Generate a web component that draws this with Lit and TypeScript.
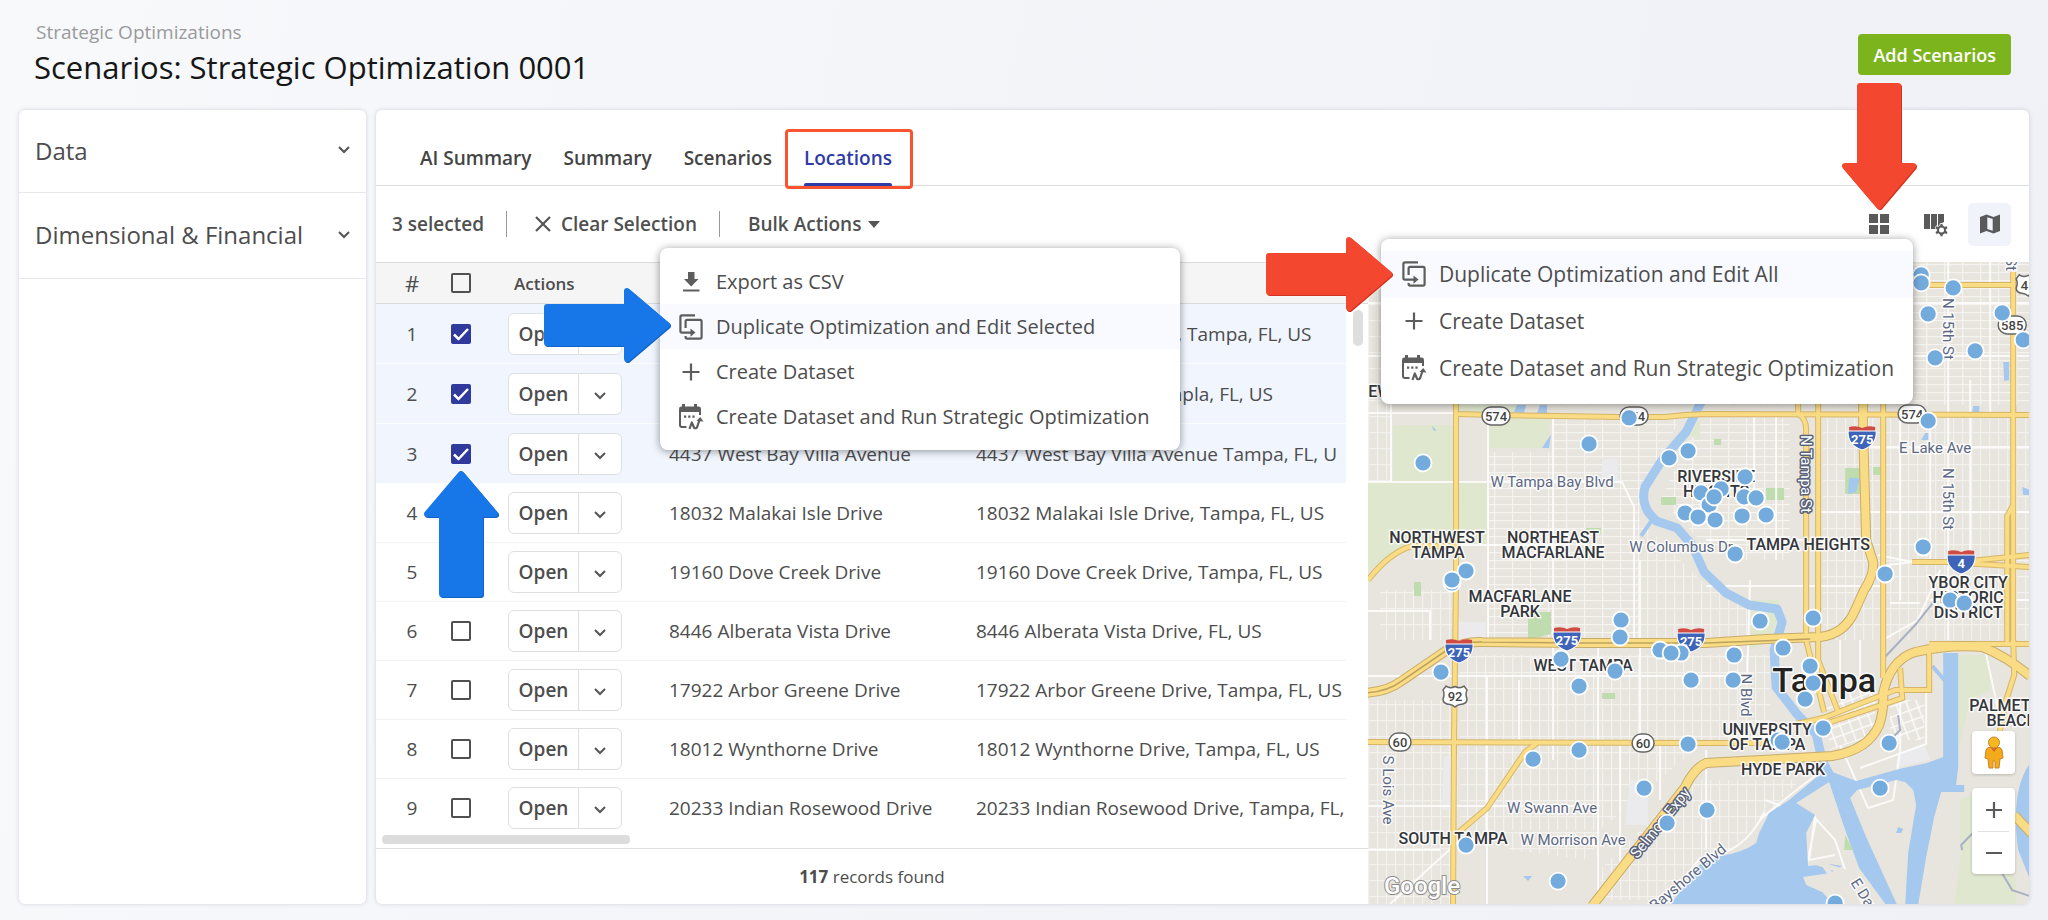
import { LitElement, html, svg, css } from "lit";
import { customElement, property } from "lit/decorators.js";

interface Location {
  name: string;
  address: string;
  selected: boolean;
}

const LOCATIONS: Location[] = [
  { name: "18119 Sandy Pointe Drive", address: "18119 Sandy Pointe Dr, Tampa, FL, US", selected: true },
  { name: "8710 Key Biscayne Drive", address: "8710 Key Biscayne Tampla, FL, US", selected: true },
  { name: "4437 West Bay Villa Avenue", address: "4437 West Bay Villa Avenue Tampa, FL, U", selected: true },
  { name: "18032 Malakai Isle Drive", address: "18032 Malakai Isle Drive, Tampa, FL, US", selected: false },
  { name: "19160 Dove Creek Drive", address: "19160 Dove Creek Drive, Tampa, FL, US", selected: false },
  { name: "8446 Alberata Vista Drive", address: "8446 Alberata Vista Drive, FL, US", selected: false },
  { name: "17922 Arbor Greene Drive", address: "17922 Arbor Greene Drive, Tampa, FL, US", selected: false },
  { name: "18012 Wynthorne Drive", address: "18012 Wynthorne Drive, Tampa, FL, US", selected: false },
  { name: "20233 Indian Rosewood Drive", address: "20233 Indian Rosewood Drive, Tampa, FL,", selected: false },
];

const chevron = html`<svg class="chevron" width="14" height="10" viewBox="0 0 14 10" aria-hidden="true">
  <path d="M2 2l5 5 5-5" fill="none" stroke="#555" stroke-width="2" />
</svg>`;

const iconDownload = html`<svg width="24" height="24" viewBox="0 0 24 24" aria-hidden="true">
  <path d="M9 2h6.500v7h4L12.200 16.500L5 9h4z" fill="#5d5d5d" /><path d="M4 19.500h16.500v2H4z" fill="#5d5d5d" />
</svg>`;

const iconDuplicate = html`<svg width="26" height="28" viewBox="0 0 26 28" aria-hidden="true">
  <g fill="none" stroke="#5d5d5d" stroke-width="2.200">
    <path d="M17 2.400H4Q2.400 2.400 2.400 4V18Q2.400 19.600 4 19.600H14" />
    <path d="M7.600 15V8.400Q7.600 6.800 9.200 6.800H22Q23.600 6.800 23.600 8.400V24Q23.600 25.600 22 25.600H9.200Q7.600 25.600 7.600 24V23" />
  </g>
  <path d="M12.500 15.500l5 4.100-5 4.100z" fill="#5d5d5d" />
</svg>`;

const iconPlus = html`<svg width="20" height="20" viewBox="0 0 20 20" aria-hidden="true">
  <path d="M10 1.500v17M1.500 10h17" stroke="#5d5d5d" stroke-width="2.200" />
</svg>`;

const iconCalendar = html`<svg width="28" height="28" viewBox="0 0 28 28" aria-hidden="true">
  <path d="M2 6Q2 3.600 4.400 3.600H5V1H8V3.600H17V1H20V3.600H21.500Q24 3.600 24 6V9H2Z" fill="#5d5d5d" />
  <path d="M3 9V22Q3 24 5 24H9.500M23 9V12" fill="none" stroke="#5d5d5d" stroke-width="2" />
  <path d="M7 12.500h2.200v2.200H7zM11.200 12.500h2.200v2.200h-2.200zM15.400 12.500h2.200v2.200h-2.200z" fill="#5d5d5d" />
  <path d="M12.500 26L14.800 19.500L17.200 25Q19.800 26 20.500 23L22.500 17" fill="none" stroke="#5d5d5d" stroke-width="2.200" stroke-linejoin="round" />
  <path d="M19.500 18L23.200 14L26.500 18.500z" fill="#5d5d5d" />
</svg>`;

const ICONS = { download: iconDownload, duplicate: iconDuplicate, plus: iconPlus, calendar: iconCalendar };

interface MenuEntry {
  icon: keyof typeof ICONS;
  label: string;
  active?: boolean;
}

@customElement("callout-arrow")
export class CalloutArrow extends LitElement {
  @property() color = "blue";
  @property() direction = "right";
  @property({ type: Number }) shaft = 80;

  static styles = css`
    :host {
      display: block;
      pointer-events: none;
    }
    svg {
      display: block;
      overflow: visible;
      filter: drop-shadow(0 0 1px rgba(255, 255, 255, 0.9));
    }
    .edge {
      stroke-width: 6;
      stroke-linejoin: round;
    }
    .blue {
      fill: #1877e8;
      stroke: #1877e8;
    }
    .blue-edge {
      fill: #1462c4;
      stroke: #1462c4;
    }
    .red {
      fill: #f4472f;
      stroke: #f4472f;
    }
    .red-edge {
      fill: #cf3320;
      stroke: #cf3320;
    }
  `;

  render() {
    const s = this.shaft;
    const len = s + 46;
    const pointing = this.direction === "right";
    const d = pointing
      ? `M3 19H${s + 3}V3L${len - 3} 37L${s + 3} 71V55H3Z`
      : this.direction === "up"
        ? `M37 3L71 43H56V${len - 3}H18V43H3Z`
        : `M18 3H56V${s + 3}H71L37 ${len - 3}L3 ${s + 3}H18Z`;
    const w = pointing ? len : 74;
    const h = pointing ? 74 : len;
    return html`<svg width=${w} height=${h} viewBox="0 0 ${w} ${h}" aria-hidden="true">
      <path class="edge ${this.color}-edge" d=${d} transform="translate(1 1)" />
      <path class="edge ${this.color}" d=${d} />
    </svg>`;
  }
}

@customElement("action-menu")
export class ActionMenu extends LitElement {
  @property({ attribute: false }) items: MenuEntry[] = [];
  @property() size = "regular";

  static styles = css`
    :host {
      display: block;
      background: #fff;
      border-radius: 8px;
      box-shadow: 0 1px 8px rgba(0, 0, 0, 0.42);
    }
    .menu {
      display: flex;
      flex-direction: column;
      padding: 11px 0;
    }
    .menu.large {
      padding: 12px 0;
    }
    .item {
      display: grid;
      grid-template-columns: 30px 1fr;
      align-items: center;
      column-gap: 10px;
      height: 45px;
      padding: 0 16px;
      border: 0;
      background: none;
      color: #4d4d4d;
      font: 400 20px/28px "Open Sans", sans-serif;
      text-align: left;
      white-space: nowrap;
    }
    .large .item {
      height: 47px;
      padding: 0 18px;
      font-size: 21px;
    }
    .item.active {
      background: #f8faff;
    }
    .icon {
      display: grid;
      place-items: center;
    }
  `;

  render() {
    return html`<div class="menu ${this.size}" role="menu">
      ${this.items.map(
        (i) => html`<button class="item ${i.active ? "active" : ""}" role="menuitem">
          <span class="icon">${ICONS[i.icon]}</span><span>${i.label}</span>
        </button>`
      )}
    </div>`;
  }
}

const PINS: [number, number][] = [
  [1921, 275], [1921, 283], [1953, 288], [1928, 314], [2002, 313], [2023, 340], [1975, 351], [1935, 358],
  [1928, 421], [1745, 477], [1423, 463], [1589, 444], [1629, 418], [1669, 458], [1688, 451], [1701, 493],
  [1709, 505], [1685, 513], [1698, 517], [1721, 489], [1714, 497], [1744, 497], [1756, 498], [1715, 520],
  [1742, 516], [1766, 515], [1735, 554], [1923, 547], [1885, 574], [1466, 571], [1452, 583], [1452, 580],
  [1621, 620], [1620, 637], [1561, 659], [1441, 672], [1579, 686], [1615, 671], [1660, 650], [1681, 653],
  [1671, 653], [1691, 680], [1688, 744], [1579, 750], [1533, 759], [1644, 788], [1667, 823], [1466, 845],
  [1558, 881], [1760, 621], [1813, 618], [1783, 648], [1734, 655], [1733, 680], [1810, 666], [1813, 683],
  [1805, 699], [1823, 728], [1778, 740], [1782, 742], [1889, 743], [1880, 788], [1707, 810], [1835, 903],
  [1950, 600], [1964, 603],
];

const ROADS: string[] = [
  "M1456 262V580L1454 740L1453 906",
  "M1456 414L1495 415L1620 417H1665L1685 415L1706 414L2030 415",
  "M1914 285H2014",
  "M2013 272V505L2007 516V645M2013 505V645",
  "M1798 400V414Q1806 418 1806 430V640L1824 712",
  "M1818 400V660L1838 712",
  "M1883 400V678",
  "M1912 562H1960L2030 555M1960 563L2030 567",
  "M1368 742L1706 743H1766",
  "M1796 724L1823 718L1895 690H1929V650M1900 668L1902 698L1830 722",
  "M1537 743L1525 752L1487 808L1459 832",
  "M1368 580Q1390 552 1412 546H1456",
  "M2013 640L2014 675L2006 700L1998 740",
  "M1929 644H2030",
];

const HIGHWAYS: string[] = [
  "M1863 400V430L1866 540L1873 562Q1874 575 1864 590L1855 610Q1845 634 1820 637L1766 639L1706 643H1584L1482 642Q1465 641 1447 650L1400 682Q1388 691 1366 693",
  "M1592 906L1685 787Q1694 768 1706 763L1832 756Q1868 750 1879 725Q1884 710 1883 693Q1890 660 1915 652Q1950 644 1982 647Q2004 655 2030 676",
  "M2014 815L2032 834",
];

const STREETS: string[] = [
  "M1368 303H2030M1391 262V482M1368 482H1622L1634 507V640M1488 415V640M1553 415V760M1456 545H1560M1368 413H1456",
  "M1368 356H2030M1948 262V640M1868 447H2030M1820 512H2030M1754 415V500M1776 415V560M1706 540H1860",
  "M1368 611H1430V640M1368 676H1740M1487 676V904M1519 680V742M1598 640V904M1640 560V742M1368 806H1600M1460 840L1390 904",
  "M1368 850H1440M1620 745V870M1660 742V800M1706 750V850M1750 580L1747 680M1706 586H1880M1840 640V690M1860 640V685",
  "M1900 690V750L1893 800L1868 808L1840 745M1926 692V744L1860 768M1765 800L1815 818L1835 840L1845 870L1862 904",
  "M1764 812Q1744 855 1700 858L1665 904M1816 775Q1770 810 1760 820M1815 815L1809 860L1835 855M1816 820L1806 867",
  "M1882 640L1918 620L1940 570M1929 600H2030M1890 603H1920M1985 650L2000 720L2010 760",
  "M1868 415V560M1900 415V600M1930 415V560M1970 380V560M1990 262V415",
  "M1870 565L1860 600M1878 555L1912 562L1880 566",
];

type Label = [string, number, number];
const AREAS: Label[] = [
  ["NORTHWEST", 1437, 543], ["TAMPA", 1438, 558],
  ["NORTHEAST", 1553, 543], ["MACFARLANE", 1553, 558],
  ["MACFARLANE", 1520, 602], ["PARK", 1520, 617],
  ["WEST TAMPA", 1583, 671], ["SOUTH TAMPA", 1453, 844],
  ["RIVERSIDE", 1716, 482], ["HEIGHTS", 1716, 497],
  ["TAMPA HEIGHTS", 1808, 550],
  ["YBOR CITY", 1968, 588], ["HISTORIC", 1968, 603], ["DISTRICT", 1968, 618],
  ["UNIVERSITY", 1767, 735], ["OF TAMPA", 1767, 750],
  ["HYDE PARK", 1783, 775],
];

const interstate = (x: number, y: number, n: string) => svg`
  <g transform="translate(${x} ${y})">
    <path d="M-13 -11Q-6 -13 0 -10Q6 -13 13 -11V-6H-13Z" fill="#cf4b43" />
    <path d="M-14 -7H14Q15 7 0 12Q-15 7 -14 -7Z" fill="#3d64b8" stroke="#fff" stroke-width="1" />
    <text class="shield-white" y="6">${n}</text>
  </g>`;

const oval = (x: number, y: number, n: string) => svg`
  <g transform="translate(${x} ${y})">
    <rect x=${n.length > 2 ? -14 : -11} y="-9" width=${n.length > 2 ? 28 : 22} height="18" rx="9" fill="#fff" stroke="#666" stroke-width="1.500" />
    <text class="shield-dark" y="5">${n}</text>
  </g>`;

const usRoute = (x: number, y: number, n: string) => svg`
  <g transform="translate(${x} ${y})">
    <path d="M-9 -10Q-5 -7 0 -9.500Q5 -7 9 -10L12 -6Q10 -2 12 3Q12 8 5 8.500Q2 9 0 11Q-2 9 -5 8.500Q-12 8 -12 3Q-10 -2 -12 -6Z" fill="#fff" stroke="#666" stroke-width="1.500" />
    <text class="shield-dark" y="5">${n}</text>
  </g>`;

@customElement("location-map")
export class LocationMap extends LitElement {
  static styles = css`
    :host {
      display: block;
      position: relative;
      overflow: hidden;
      border-radius: 0 0 6px 0;
      background: #e8e5de;
    }
    .canvas {
      display: block;
      position: absolute;
      inset: 0;
      width: 100%;
      height: 100%;
    }
    text {
      font-family: Roboto, sans-serif;
      text-anchor: middle;
      paint-order: stroke;
      stroke: rgba(255, 255, 255, 0.85);
      stroke-width: 3px;
      stroke-linejoin: round;
    }
    .area {
      font-size: 16px;
      font-weight: 500;
      fill: #33363b;
    }
    .street {
      font-size: 15px;
      fill: #5b6884;
    }
    .major {
      font-size: 15px;
      fill: #fff;
      stroke: #56617a;
    }
    .city {
      font-size: 34px;
      font-weight: 500;
      fill: #222;
    }
    .shield-white {
      font-size: 13px;
      font-weight: 700;
      fill: #fff;
      stroke: none;
    }
    .shield-dark {
      font-size: 13px;
      font-weight: 500;
      fill: #444;
      stroke: none;
    }
    .brand {
      font: 500 24px Roboto, sans-serif;
      fill: #fff;
      stroke: #8c8c8c;
      stroke-width: 2px;
    }
    .casing {
      fill: none;
      stroke: #d8b668;
      stroke-width: 6px;
    }
    .road {
      fill: none;
      stroke: #f9dc84;
      stroke-width: 4px;
    }
    .casing.wide {
      stroke: #c9ac6a;
      stroke-width: 10px;
    }
    .road.wide {
      stroke-width: 8px;
    }
    .street-line {
      fill: none;
      stroke: #fff;
      stroke-width: 2px;
      opacity: 0.8;
    }
    .controls {
      position: absolute;
      right: 14px;
      bottom: 30px;
      display: flex;
      flex-direction: column;
      gap: 14px;
    }
    .person,
    .zoom {
      width: 43px;
      border-radius: 4px;
      background: #fff;
      box-shadow: 0 1px 3px rgba(0, 0, 0, 0.2);
    }
    .person {
      height: 43px;
      padding: 0;
      border: 0;
      display: grid;
      place-items: center;
    }
    .zoom {
      display: flex;
      flex-direction: column;
    }
    .zoom button {
      height: 43px;
      margin: 0 6px;
      padding: 0;
      border: 0;
      background: none;
      display: grid;
      place-items: center;
    }
    .zoom button + button {
      border-top: 1px solid #e2e2e2;
    }
  `;

  render() {
    return html`
      <svg class="canvas" viewBox="1368 262 661 642" preserveAspectRatio="xMidYMid slice" role="img" aria-label="Tampa">
        <defs>
          <pattern id="blocks" width="18" height="8" patternUnits="userSpaceOnUse">
            <path d="M0 .5H18M.5 0V8" stroke="#fff" stroke-width="1.200" opacity=".6" />
          </pattern>
          <pattern id="columns" width="9" height="16" patternUnits="userSpaceOnUse">
            <path d="M0 .5H9M.5 0V16" stroke="#fff" stroke-width="1.200" opacity=".5" />
          </pattern>
          <pattern id="downtown" width="10" height="10" patternUnits="userSpaceOnUse" patternTransform="rotate(-20)">
            <path d="M0 .5H10M.5 0V10" stroke="#fff" stroke-width="1.800" opacity=".85" />
          </pattern>
        </defs>
        <rect x="1368" y="262" width="661" height="642" fill="#e8e5de" />
        <path d="M1459 262H2029V405H1459ZM1488 452H1640V640H1488ZM1552 418H1680L1640 500H1552ZM1700 418H1790V560H1720L1660 500Z" fill="url(#blocks)" />
        <path d="M1368 262H1392V482H1368ZM1823 418H2029V640H1823ZM1460 655H1770V740H1460ZM1368 700H1452V904H1368ZM1460 745H1700L1600 830H1460ZM1500 832H1600L1590 860L1510 850ZM1600 870L1690 780H1800L1730 850L1660 900H1600ZM1380 590H1452V640H1380ZM1640 520L1700 580L1760 610V640H1640Z" fill="url(#columns)" />
        <path d="M1824 700L1876 680L1874 735L1830 750ZM1890 700H1924V740H1890Z" fill="url(#downtown)" />
        <g fill="#dfe7cf">
          <path d="M1393 425H1453V482H1393ZM1368 482H1487V545H1410L1385 562L1368 570ZM1488 418H1552L1546 448H1488ZM1459 405H1518V413H1459Z" />
          <path d="M1958 655H1990V690L1970 700L1958 750ZM1960 800L1985 790V835L1960 850ZM1954 904L1962 845L2000 850L2016 880V904ZM1752 600H1780L1772 640L1750 650ZM1700 418L1690 436L1700 440Z" />
        </g>
        <g fill="#bfdcae">
          <path d="M1528 612H1551V634L1528 640ZM1845 468H1868V494H1845ZM1766 488H1784V500H1766ZM1661 497H1676V505H1661ZM1414 582H1421V596H1414ZM1602 693H1615V699H1602ZM1586 528H1601V534H1586ZM1873 467H1881V475H1873ZM1714 439H1721V445H1714ZM1845 835L1853 850L1844 850Z" />
        </g>
        <g fill="#ebebee">
          <path d="M1459 622H1486V640L1459 642ZM1602 459H1618V482H1602ZM1444 756H1458V810H1442ZM1630 780H1648V825H1625ZM1898 755L1924 744L1930 760L1895 768Z" />
        </g>
        ${STREETS.map((d) => svg`<path class="street-line" d=${d} />`)}
        <g fill="#a5c8ee">
          <path d="M1818 776L1789 800L1769 813L1759 833L1756 843Q1742 853 1720 856L1700 864L1670 905H1834L1822 892L1806 885L1803 877L1830 873L1842 866L1830 864L1808 866L1806 833L1815 815L1796 803L1829 782L1845 830L1859 868L1886 905H1897L1866 837L1850 798L1857 790L1896 780L1905 782L1913 790L1916 805L1908 853L1905 905H1918L1926 857L1934 817L1941 792H1964V785H1956L1958 767V653H1943V757L1927 763L1899 769L1856 781L1832 772Z" />
          <path d="M2030 763Q2010 790 2018 850L2030 880ZM2003 362H2009V380L2004 381ZM1973 406H1979V412H1972ZM1849 478L1860 478L1856 492L1848 494ZM1925 433H1928V440H1921ZM1523 876H1532L1528 881ZM1898 827L1903 829L1901 833H1896ZM1432 426L1437 431L1433 430ZM1514 412L1517 405H1526L1524 413ZM1537 413L1540 405H1547V413ZM1542 448L1551 434L1549 448Z" />
          <path d="M2022 487L2030 490V495H2023Z" />
        </g>
        <path d="M1702 400L1686 432L1662 460L1645 487Q1641 500 1648 512L1656 521L1677 528L1692 545L1704 572L1726 593L1749 605L1777 609L1782 622L1774 650L1776 687L1796 713L1816 734L1822 760L1832 780" fill="none" stroke="#a5c8ee" stroke-width="9" stroke-linejoin="round" />
        <path d="M1652 520L1641 536M1932 666L1946 682" fill="none" stroke="#a5c8ee" stroke-width="4" />
        <path d="M1882 660L1915 625L1935 600M1962 850L1961 845L1985 820M2000 870L2012 890L2030 896M1890 740L1900 730L1898 715" fill="none" stroke="#a9b0c4" stroke-width="2" />
        <path d="M1815 862L1845 872L1858 904M1822 862L1840 888L1828 892L1836 904" fill="none" stroke="#e8e5de" stroke-width="5" />
        ${ROADS.map((d) => svg`<path class="casing" d=${d} />`)}
        ${HIGHWAYS.map((d) => svg`<path class="casing wide" d=${d} />`)}
        ${ROADS.map((d) => svg`<path class="road" d=${d} />`)}
        ${HIGHWAYS.map((d) => svg`<path class="road wide" d=${d} />`)}
        <path d="M1810 639L1706 643H1584L1482 642Q1465 641 1447 650L1400 682Q1388 691 1366 693" fill="none" stroke="#bda25f" stroke-width="1.500" />

        ${interstate(1862, 438, "275")} ${interstate(1961, 562, "4")} ${interstate(1567, 639, "275")}
        ${interstate(1459, 651, "275")} ${interstate(1691, 640, "275")}
        ${oval(1496, 416, "574")} ${oval(1634, 416, "574")} ${oval(1912, 414, "574")} ${oval(2012, 325, "585")}
        ${oval(1400, 742, "60")} ${oval(1643, 743, "60")} ${usRoute(1455, 696, "92")} ${usRoute(2028, 285, "41")}

        ${AREAS.map(([t, x, y]) => svg`<text class="area" x=${x} y=${y}>${t}</text>`)}
        <text class="area" x="2010" y="711">PALMETTO</text>
        <text class="area" x="2012" y="726">BEACH</text>
        <text class="area" x="1396" y="397">EWOOD</text>
        <text class="city" x="1824" y="692">Tampa</text>
        <text class="street" x="1552" y="487">W Tampa Bay Blvd</text>
        <text class="street" x="1681" y="552">W Columbus Dr</text>
        <text class="street" x="1935" y="453">E Lake Ave</text>
        <text class="street" x="1552" y="813">W Swann Ave</text>
        <text class="street" x="1573" y="845">W Morrison Ave</text>
        <text class="street" transform="translate(1943 329) rotate(90)">N 15th St</text>
        <text class="street" transform="translate(1943 499) rotate(90)">N 15th St</text>
        <text class="street" transform="translate(2006 264) rotate(90)">St</text>
        <text class="street" transform="translate(1741 695) rotate(90)">N Blvd</text>
        <text class="street" transform="translate(1383 790) rotate(90)">S Lois Ave</text>
        <text class="street" transform="translate(1691 881) rotate(-40)">Bayshore Blvd</text>
        <text class="street" transform="translate(1863 903) rotate(58)">E Davis</text>
        <text class="major" transform="translate(1801 474) rotate(90)">N Tampa St</text>
        <text class="major" transform="translate(1664 826) rotate(-51)">Selmon Expy</text>
        <text class="brand" x="1422" y="894">Google</text>
        ${PINS.map(([x, y]) => svg`<circle cx=${x} cy=${y} r="8.500" fill="#74abdd" stroke="#fff" stroke-width="1.800" />`)}
      </svg>
      <div class="controls">
        <button class="person" aria-label="Street view">
          <svg width="22" height="34" viewBox="0 0 22 34" aria-hidden="true">
            <path d="M3 14Q4 11 8 11H14Q18 11 19 14L20 22L17 23L16 32H12V25H10V32H6L5 23L2 22Z" fill="#f3ab1c" stroke="#c9832b" stroke-width="1" />
            <path d="M7 11L11 16L15 11Z" fill="#d9652b" />
            <circle cx="11" cy="6.500" r="5.500" fill="#f8b820" stroke="#c9832b" stroke-width="1" />
          </svg>
        </button>
        <div class="zoom">
          <button aria-label="Zoom in">
            <svg width="16" height="16" viewBox="0 0 16 16"><path d="M8 0v16M0 8h16" stroke="#5a5a5a" stroke-width="2.200" /></svg>
          </button>
          <button aria-label="Zoom out">
            <svg width="16" height="16" viewBox="0 0 16 16"><path d="M0 8h16" stroke="#5a5a5a" stroke-width="2.200" /></svg>
          </button>
        </div>
      </div>
    `;
  }
}

@customElement("app-root")
export class AppRoot extends LitElement {
  static styles = css`
    :host {
      display: block;
      font-family: "Open Sans", sans-serif;
      color: #4d4d4d;
    }
    * {
      box-sizing: border-box;
    }
    button {
      font-family: inherit;
      color: inherit;
    }
    .page {
      display: flex;
      flex-direction: column;
      height: 100vh;
      background: linear-gradient(100deg, #f7f9fb 0%, #f4f5f9 40%, #f0f1f6 100%);
    }
    .top {
      display: flex;
      justify-content: space-between;
      align-items: flex-start;
      height: 110px;
      padding: 20px 37px 0 34px;
    }
    .crumb {
      display: block;
      padding-left: 2px;
      color: #9a9a9a;
      font-size: 19px;
      line-height: 24px;
      text-decoration: none;
    }
    .title {
      margin: 0;
      color: #161616;
      font-size: 31px;
      font-weight: 400;
      line-height: 46px;
    }
    .add {
      height: 41px;
      margin-top: 14px;
      padding: 0 15px;
      border: 0;
      border-radius: 4px;
      background: #7cb41d;
      color: #fff;
      font-size: 18px;
      font-weight: 600;
    }
    .body {
      flex: 1;
      min-height: 0;
      display: grid;
      grid-template-columns: 347px minmax(0, 1fr);
      grid-template-rows: minmax(0, 1fr);
      gap: 10px;
      padding: 0 19px 16px;
    }
    .card {
      background: #fff;
      border-radius: 6px;
      box-shadow: 0 0 4px rgba(60, 65, 90, 0.2);
    }
    .facet {
      display: flex;
      align-items: center;
      justify-content: space-between;
      width: 100%;
      height: 86px;
      padding: 0 15px 2px 16px;
      border: 0;
      border-bottom: 1px solid #e8e8ea;
      background: none;
      font-size: 24px;
    }
    .facet:first-child {
      height: 83px;
    }
    .main {
      display: flex;
      flex-direction: column;
      min-width: 0;
    }
    .tabs {
      display: flex;
      gap: 32px;
      height: 76px;
      padding-left: 44px;
      border-bottom: 1px solid #dcdee0;
    }
    .tab {
      position: relative;
      margin: 0;
      padding: 20px 0 0;
      border: 0;
      background: none;
      color: #444;
      font-size: 19px;
      font-weight: 600;
    }
    .tab.current {
      color: #2f3ba6;
    }
    .tab.current::after {
      content: "";
      position: absolute;
      left: 0;
      right: 0;
      bottom: -1px;
      height: 3px;
      border-radius: 2px 2px 0 0;
      background: #2f3ba6;
    }
    .ring {
      position: absolute;
      inset: 19px -21px -4px -19px;
      border: 3px solid #f9532f;
      border-radius: 4px;
    }
    .toolbar {
      display: flex;
      align-items: center;
      height: 76px;
      padding: 0 18px 0 16px;
      font-size: 19px;
      font-weight: 600;
      color: #505050;
    }
    .rule {
      width: 1px;
      height: 26px;
      margin: 0 28px 0 22px;
      background: #999;
    }
    .plain {
      display: flex;
      align-items: center;
      gap: 10px;
      padding: 0;
      border: 0;
      background: none;
      font-size: 19px;
      font-weight: 600;
    }
    .anchor {
      position: relative;
    }
    .bulk {
      gap: 7px;
    }
    .bulk-menu {
      position: absolute;
      z-index: 3;
      left: -88px;
      top: 37px;
      width: 520px;
    }
    .view-menu {
      position: absolute;
      z-index: 3;
      right: -24px;
      top: 36px;
      width: 532px;
    }
    .arrow {
      position: absolute;
      z-index: 4;
    }
    .arrow.to-bulk {
      left: -204px;
      top: 77px;
    }
    .arrow.to-view {
      right: 497px;
      top: 34px;
    }
    .arrow.to-grid {
      right: -27px;
      top: -120px;
    }
    .arrow.to-check {
      left: 50%;
      bottom: -114px;
      margin-left: -37px;
    }
    .tools {
      display: flex;
      align-items: center;
      gap: 12px;
      margin-left: auto;
    }
    .tool {
      display: grid;
      place-items: center;
      width: 43px;
      height: 43px;
      padding: 0;
      border: 0;
      border-radius: 5px;
      background: none;
    }
    .tool.on {
      background: #f1f3fb;
    }
    .anchor.grid {
      width: 20px;
      margin-right: 12px;
      display: grid;
      place-items: center;
    }
    .grid .tool {
      width: 20px;
    }
    .split {
      flex: 1;
      min-height: 0;
      display: grid;
      grid-template-columns: 3fr 2fr;
      grid-template-rows: minmax(0, 1fr);
    }
    .list {
      position: relative;
      display: flex;
      flex-direction: column;
      min-width: 0;
    }
    .rows {
      flex: 1;
      min-height: 0;
      overflow: hidden;
    }
    table {
      width: 100%;
      table-layout: fixed;
      border-collapse: separate;
      border-spacing: 0;
    }
    .c-num {
      width: 72px;
    }
    .c-check {
      width: 26px;
    }
    .c-act {
      width: 195px;
    }
    .c-name {
      width: 307px;
    }
    .c-bar {
      width: 22px;
    }
    th {
      height: 42px;
      padding: 0;
      border-top: 1px solid #dadada;
      border-bottom: 1px solid #dadada;
      background: #f5f5f5;
      font-size: 17px;
      font-weight: 600;
      text-align: left;
    }
    td {
      height: 59px;
      padding: 0;
      border-bottom: 1px solid #f1f2f4;
      font-size: 19px;
      white-space: nowrap;
      overflow: hidden;
    }
    .chosen td {
      height: 60px;
      background: #f0f5fe;
      border-bottom-color: #fbfdff;
    }
    .chosen td.gutter,
    td.gutter {
      background: #fff;
      border: 0;
    }
    .num,
    th.num {
      text-align: center;
    }
    th.num {
      font-size: 22px;
      font-weight: 400;
    }
    .pick {
      position: relative;
      overflow: visible;
      text-align: center;
    }
    th.act {
      padding-left: 40px;
    }
    td.act {
      padding-left: 34px;
    }
    .box {
      appearance: none;
      display: block;
      width: 20px;
      height: 20px;
      margin: 0 auto;
      border: 2px solid #505050;
      border-radius: 2px;
      background: transparent;
    }
    .box:checked {
      border-color: #303a9c;
      background: #303a9c
        url("data:image/svg+xml,%3Csvg xmlns='http://www.w3.org/2000/svg' viewBox='0 0 16 16'%3E%3Cpath d='M1 8.500l4.500 4.500L15 3' fill='none' stroke='white' stroke-width='2.500'/%3E%3C/svg%3E")
        center / 16px 16px no-repeat;
    }
    .open {
      display: inline-grid;
      grid-template-columns: 69px 43px;
      height: 42px;
      border: 1px solid #dedfe1;
      border-radius: 6px;
      background: #fff;
      vertical-align: middle;
    }
    .open button {
      padding: 0;
      border: 0;
      background: none;
      font-size: 19px;
      font-weight: 600;
    }
    .open button + button {
      border-left: 1px solid #dedfe1;
    }
    .v-thumb {
      position: absolute;
      right: 5px;
      top: 48px;
      width: 10px;
      height: 36px;
      border-radius: 5px;
      background: #dedede;
    }
    .h-thumb {
      width: 25%;
      height: 9px;
      margin: 0 0 4px 6px;
      border-radius: 4px;
      background: #dcdcdc;
    }
    .foot {
      display: grid;
      place-items: center;
      height: 56px;
      border-top: 1px solid #e0e0e0;
      font-size: 17px;
    }
    .foot b {
      font-weight: 700;
    }
  `;

  private readonly bulkItems: MenuEntry[] = [
    { icon: "download", label: "Export as CSV" },
    { icon: "duplicate", label: "Duplicate Optimization and Edit Selected", active: true },
    { icon: "plus", label: "Create Dataset" },
    { icon: "calendar", label: "Create Dataset and Run Strategic Optimization" },
  ];

  private readonly viewItems: MenuEntry[] = [
    { icon: "duplicate", label: "Duplicate Optimization and Edit All", active: true },
    { icon: "plus", label: "Create Dataset" },
    { icon: "calendar", label: "Create Dataset and Run Strategic Optimization" },
  ];

  private row(l: Location, i: number) {
    const n = i + 1;
    return html`<tr class=${l.selected ? "chosen" : ""}>
      <td class="num">${n}</td>
      <td class="pick">
        <input class="box" type="checkbox" aria-label="Select row ${n}" .checked=${l.selected} />
        ${n === 3 ? html`<callout-arrow class="arrow to-check" color="blue" direction="up"></callout-arrow>` : ""}
      </td>
      <td class="act">
        <div class="open"><button>Open</button><button aria-label="More actions">${chevron}</button></div>
      </td>
      <td>${l.name}</td>
      <td>${l.address}</td>
      <td class="gutter"></td>
    </tr>`;
  }

  render() {
    return html`<div class="page">
      <header class="top">
        <div>
          <a class="crumb" href="#">Strategic Optimizations</a>
          <h1 class="title">Scenarios: Strategic Optimization 0001</h1>
        </div>
        <button class="add">Add Scenarios</button>
      </header>
      <div class="body">
        <aside class="card">
          <button class="facet"><span>Data</span>${chevron}</button>
          <button class="facet"><span>Dimensional &amp; Financial</span>${chevron}</button>
        </aside>
        <main class="card main">
          <nav class="tabs">
            <button class="tab">AI Summary</button>
            <button class="tab">Summary</button>
            <button class="tab">Scenarios</button>
            <button class="tab current">Locations<span class="ring"></span></button>
          </nav>
          <div class="toolbar">
            <span>3 selected</span>
            <span class="rule"></span>
            <button class="plain">
              <svg width="16" height="16" viewBox="0 0 16 16" aria-hidden="true"><path d="M1 1l14 14M15 1L1 15" stroke="#555" stroke-width="2.200" /></svg>
              Clear Selection
            </button>
            <span class="rule"></span>
            <div class="anchor">
              <button class="plain bulk">
                Bulk Actions
                <svg width="12" height="7" viewBox="0 0 12 7" aria-hidden="true"><path d="M0 0h12L6 7z" fill="#555" /></svg>
              </button>
              <action-menu class="bulk-menu" .items=${this.bulkItems}></action-menu>
              <callout-arrow class="arrow to-bulk" color="blue"></callout-arrow>
            </div>
            <div class="tools">
              <div class="anchor grid">
                <button class="tool" aria-label="Optimization actions">
                  <svg width="20" height="20" viewBox="0 0 20 20"><path d="M0 0h9v9H0zM11 0h9v9h-9zM0 11h9v9H0zM11 11h9v9h-9z" fill="#5a5a5a" /></svg>
                </button>
                <action-menu class="view-menu" size="large" .items=${this.viewItems}></action-menu>
                <callout-arrow class="arrow to-view" color="red"></callout-arrow>
                <callout-arrow class="arrow to-grid" color="red" direction="down"></callout-arrow>
              </div>
              <button class="tool" aria-label="Column settings">
                <svg width="26" height="26" viewBox="0 0 26 26">
                  <path d="M2 3h6v15H2zM9 3h6v15H9zM16 3h6v8l-4 2-1 5h-1z" fill="#5a5a5a" />
                  <path d="M18.300 12.500h2.400l.5 2 1.500.9 2-.6 1.200 2.100-1.500 1.400v1.600l1.500 1.400-1.200 2.100-2-.6-1.500.9-.5 2h-2.400l-.5-2-1.500-.9-2 .6-1.200-2.100 1.500-1.400v-1.600l-1.500-1.400 1.200-2.100 2 .6 1.500-.9z" fill="#5a5a5a" stroke="#fff" stroke-width=".8" />
                  <circle cx="19.500" cy="19.100" r="2.500" fill="#fff" />
                </svg>
              </button>
              <button class="tool on" aria-label="Map view">
                <svg width="22" height="22" viewBox="0 0 22 22">
                  <path d="M1 4L7.500 1.500L14.500 4L21 1.500V18L14.500 20.500L7.500 18L1 20.500Z" fill="#5a5a5a" />
                  <path d="M8.300 4.200L13.700 6.100V17.800L8.300 15.900Z" fill="#f1f3fb" />
                </svg>
              </button>
            </div>
          </div>
          <div class="split">
            <section class="list">
              <div class="rows">
                <table>
                  <colgroup>
                    <col class="c-num" /><col class="c-check" /><col class="c-act" /><col class="c-name" /><col /><col class="c-bar" />
                  </colgroup>
                  <thead>
                    <tr>
                      <th class="num">#</th>
                      <th class="pick"><input class="box" type="checkbox" aria-label="Select all rows" /></th>
                      <th class="act">Actions</th>
                      <th></th>
                      <th></th>
                      <th></th>
                    </tr>
                  </thead>
                  <tbody>
                    ${LOCATIONS.map((l, i) => this.row(l, i))}
                  </tbody>
                </table>
              </div>
              <div class="v-thumb"></div>
              <div class="h-thumb"></div>
              <footer class="foot"><span><b>117</b> records found</span></footer>
            </section>
            <location-map></location-map>
          </div>
        </main>
      </div>
    </div>`;
  }
}
